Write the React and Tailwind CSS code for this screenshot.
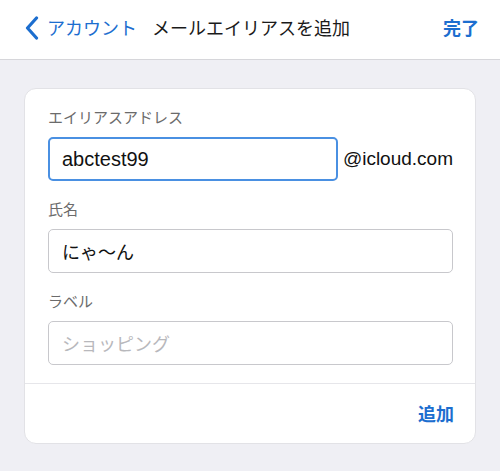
const jp = { fontFamily: '"Noto Sans CJK JP", "Liberation Sans", sans-serif' };

const Field = ({ label, children }) => (
    <div>
        <div className="text-[15px] leading-5 text-[#6b6b6b] mb-[10px]">{label}</div>
        {children}
    </div>
);

export default function App() {
    return (
        <div className="w-[500px] h-[471px] bg-[#efeff4] overflow-hidden" style={jp}>

            {/* nav bar */}
            <div className="h-[60px] bg-white border-b border-[#d6d6da] flex items-center px-[25px] pb-[4px]">
                <svg width="14" height="24" viewBox="0 0 14 24" className="mr-[8px]">
                    <path d="M11.5 2 L2.5 12 L11.5 22" fill="none" stroke="#1c6ecf" strokeWidth="3.2" strokeLinecap="round" strokeLinejoin="round" />
                </svg>
                <span className="text-[18px] text-[#1c6ecf]">アカウント</span>
                <span className="text-[18px] text-[#1a1a1a] ml-[15px]">メールエイリアスを追加</span>
                <span className="ml-auto mr-[-4px] text-[18px] font-bold text-[#1c6ecf]">完了</span>
            </div>

            {/* card */}
            <div className="mx-[24px] mt-[28px] bg-white rounded-[12px] border border-[#e2e2e6]">
                <div className="pl-[23px] pr-[22px] pt-[18px] pb-[18px] flex flex-col gap-[18px]">
                    <Field label="エイリアスアドレス">
                        <div className="flex items-center">
                            <div className="w-[291px] h-[44px] rounded-[5px] border-2 border-[#4a90e2] flex items-center pl-[12px] text-[20px] text-[#111]" style={{ fontFamily: '"Liberation Sans", sans-serif' }}>
                                abctest99
                            </div>
                            <span className="ml-[5px] text-[19px] text-[#111]" style={{ fontFamily: '"Liberation Sans", sans-serif' }}>@icloud.com</span>
                        </div>
                    </Field>

                    <Field label="氏名">
                        <div className="h-[44px] rounded-[5px] border border-[#c8c8cc] flex items-center pl-[13px] text-[18px] text-[#111]">
                            にゃ〜ん
                        </div>
                    </Field>

                    <Field label="ラベル">
                        <div className="h-[44px] rounded-[5px] border border-[#c8c8cc] flex items-center pl-[13px] text-[18px] text-[#b8b8bc]">
                            ショッピング
                        </div>
                    </Field>
                </div>

                <div className="border-t border-[#e6e6ea] h-[60px] flex items-center justify-end pr-[21px]">
                    <span className="text-[18px] font-bold text-[#1c6ecf]">追加</span>
                </div>
            </div>
        </div>
    );
}
